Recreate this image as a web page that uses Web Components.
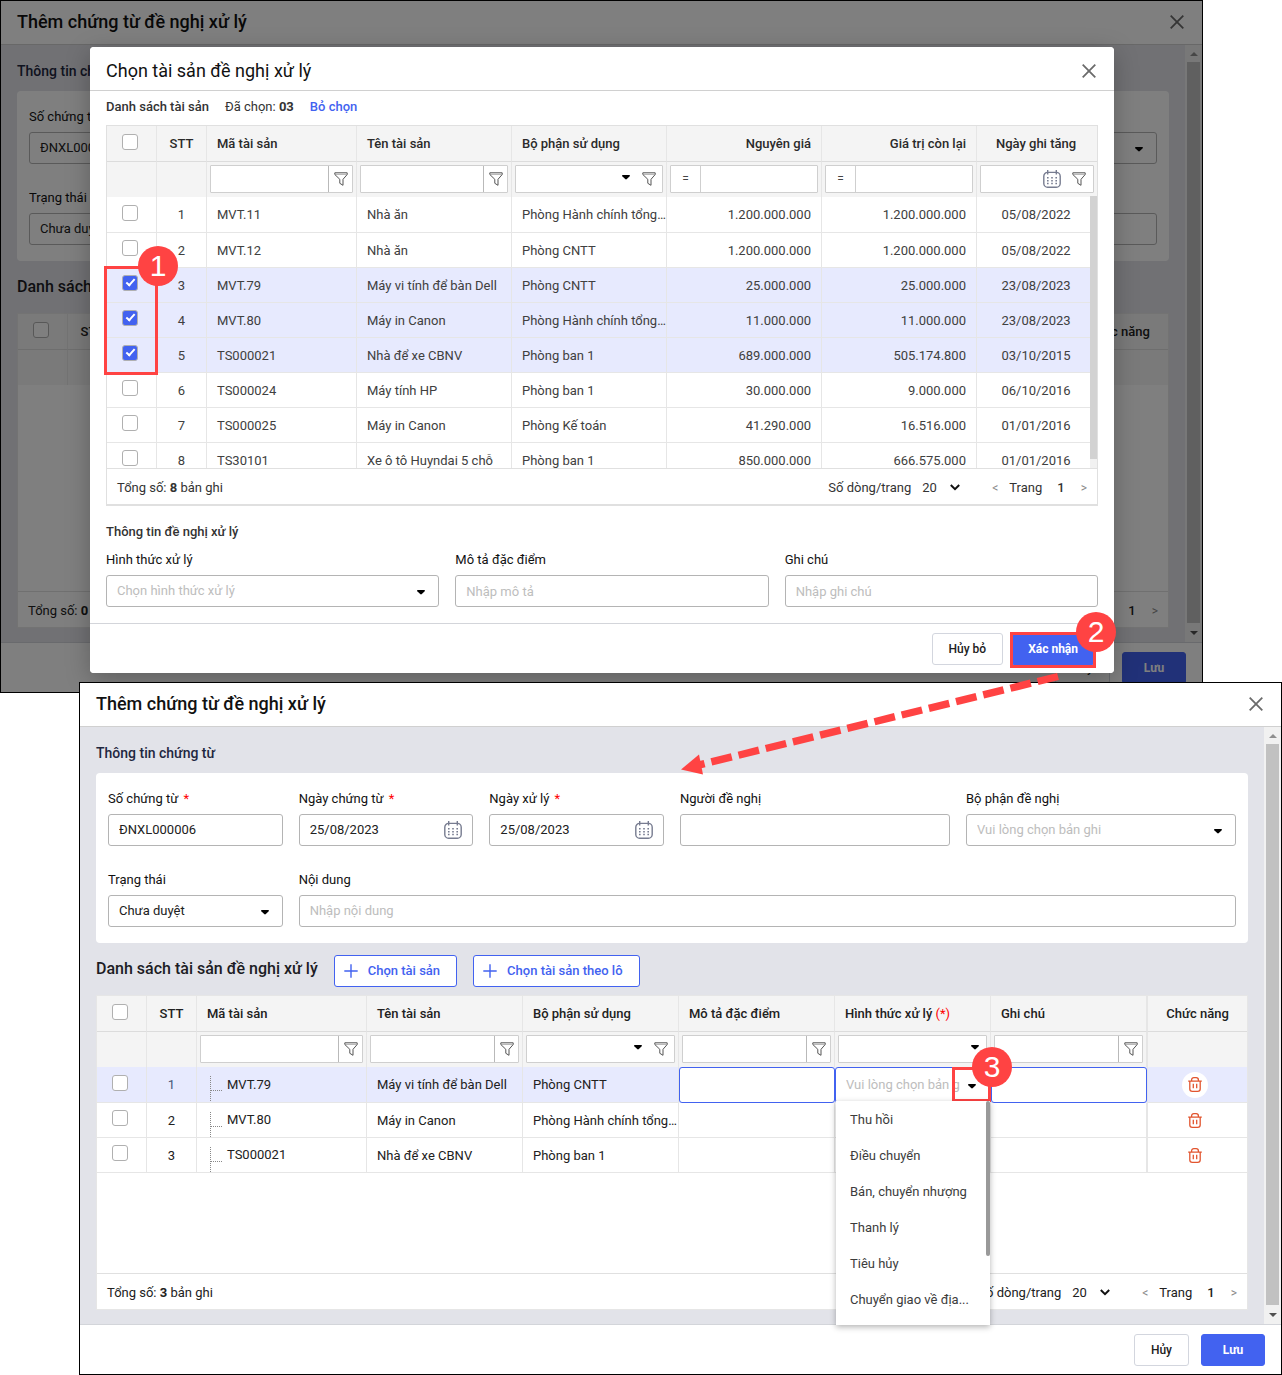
<!DOCTYPE html>
<html lang="vi">
<head>
<meta charset="utf-8">
<title>Thêm chứng từ đề nghị xử lý</title>
<style>
  body { margin: 0; background: #fff; font: 13px/18px Roboto, "Liberation Sans", sans-serif; color: #212121; }
</style>
</head>
<body>
<guide-stage></guide-stage>
<script>
const ICONS = {
  close: '<svg width="14" height="14" viewBox="0 0 14 14" fill="none" stroke="#6b6b6b" stroke-width="1.8"><path d="M.7.7l12.6 12.6M13.3.7L.7 13.3"/></svg>',
  plus: '<svg width="14" height="14" viewBox="0 0 14 14" fill="none" stroke="#4262f0" stroke-width="1.4"><path d="M7 .3v13.4M.3 7h13.4"/></svg>',
  caret: '<svg class="caret" width="8" height="5" viewBox="0 0 8 5"><path d="M.8 0h6.4c.8 0 1 .8.5 1.3L4.8 4.1c-.5.4-1.1.4-1.6 0L.3 1.3C-.2.8 0 0 .8 0z" fill="#000"/></svg>',
  chevron: '<svg width="10" height="7" viewBox="0 0 10 7" fill="none" stroke="#111" stroke-width="2"><path d="M.8 1L5 5.2 9.2 1"/></svg>',
  funnel: '<svg width="14" height="14" viewBox="0 0 14 14" fill="none" stroke="#555" stroke-width="1" stroke-linejoin="round"><path d="M.8.8h12.4v1.7L9 7.3v6l-3.2-2V7.3L.8 2.5z"/><path d="M1.2 2.4h11.6" stroke-opacity=".45"/></svg>',
  calendar: '<svg width="18" height="18" viewBox="0 0 18 18" fill="none" stroke="#777c90" stroke-width="1.4"><rect x=".8" y="2.4" width="16.4" height="14.8" rx="3.8"/><path d="M4.7 0v4.6M13.3 0v4.6"/><path d="M4 7.8h10.4M4 10.7h10.4M4 13.6h10.4" stroke-width="1.5" stroke-dasharray="1.6 2.6"/></svg>',
  trash: '<svg width="14" height="15" viewBox="0 0 14 15" fill="none" stroke="#e2552f" stroke-width="1.3"><path d="M.2 4.1h13.6M3.6 4V2.9C3.6 1.5 4.6.7 5.8.7h2.4c1.2 0 2.2.8 2.2 2.2V4M1.8 4.3v7.6c0 1.5 1 2.4 2.5 2.4h5.4c1.5 0 2.5-.9 2.5-2.4V4.3M5.3 6.7v4.6M8.7 6.7v4.6"/></svg>',
  tree: '<svg width="12" height="25" viewBox="0 0 12 25" fill="none" stroke="#888" stroke-dasharray="1 1"><path d="M.5 0v25M1 14.5h11"/></svg>'
};

const BASE = `
  *, ::before, ::after { box-sizing: border-box; }
  button, input, select { font: inherit; color: inherit; margin: 0; }
  button { cursor: pointer; }
  svg { display: block; flex: none; }
  .icon { border: 0; padding: 0; background: none; }
`;

function define(name, render) {
  customElements.define(name, class extends HTMLElement {
    constructor() { super(); this.attachShadow({ mode: 'open' }); }
    connectedCallback() {
      const t = document.createElement('template');
      t.innerHTML = render(this);
      this.shadowRoot.replaceChildren(t.content.cloneNode(true));
    }
  });
}

/* Push button: kind = primary | plain | outline */
define('ui-button', el => `
  <style>${BASE}
    :host { display: block; }
    button { display: flex; align-items: center; justify-content: center; height: 32px; width: 100%;
      border: 1px solid #d3d6de; border-radius: 3px; background: #fff; padding: 0 16px;
      font-size: 12px; font-weight: 500; color: #212121; white-space: nowrap; }
    .primary { min-width: 64px; background: #4262f0; border-color: #4262f0; color: #fff; font-weight: 700; }
    .outline { gap: 10px; padding: 0 16px 0 9px; border-color: #4262f0; color: #4262f0; font-size: 13px; }
  </style>
  <button type="button" class="${el.getAttribute('kind') || 'plain'}">${el.getAttribute('kind') === 'outline' ? ICONS.plus : ''}<slot></slot></button>`);

/* Labelled field: type = text | date | select */
define('form-field', el => {
  const a = n => el.getAttribute(n) || '';
  const type = a('type') || 'text';
  const value = a('value'), hint = a('placeholder');
  const control = type === 'select'
    ? `<select id="c" class="${value ? '' : 'hint'}"><option>${value || hint}</option></select>${ICONS.caret}`
    : `<input id="c" type="text" value="${value}" placeholder="${hint}" autocomplete="off">${type === 'date' ? `<button type="button" class="icon" aria-label="Lịch">${ICONS.calendar}</button>` : ''}`;
  return `
  <style>${BASE}
    :host { display: block; min-width: 0; }
    label { display: block; padding-top: 1px; margin-bottom: 6px; color: #111; white-space: nowrap; min-height: 19px; }
    em { color: #f00; font-style: normal; margin-left: 2px; }
    .box { display: grid; grid-template-columns: minmax(0, 1fr) auto; align-items: center; height: 32px;
      border: 1px solid #b4b4b4; border-radius: 3px; background: #fff; }
    input, select { grid-area: 1 / 1 / 2 / 3; width: 100%; height: 30px; border: 0; outline: 0; background: none; padding: 0 10px; appearance: none; }
    input { padding-bottom: var(--field-lift, 2px); }
    ::placeholder, .hint { color: #bdbdbd; opacity: 1; }
    .icon { grid-area: 1 / 2; margin-right: 10px; }
    .caret { grid-area: 1 / 2; margin: 2px 13px 0 0; pointer-events: none; }
  </style>
  <label for="c">${a('label')}${el.hasAttribute('required') ? ' <em>*</em>' : ''}</label>
  <div class="box">${control}</div>`;
});

/* Options list that opens under the edited cell */
define('option-menu', () => `
  <style>${BASE}
    :host { display: block; background: #fff; box-shadow: 0 2px 6px rgba(0,0,0,.3); }
    ul { list-style: none; margin: 0; padding: 1px 0 7px; }
    li { height: 36px; line-height: 36px; padding: 0 16px 0 14px; overflow: hidden; text-overflow: ellipsis; white-space: nowrap; color: #3c3c3c; }
    i { position: absolute; right: 0; top: 0; width: 4px; height: 155px; border-radius: 2px; background: #999; }
  </style>
  <ul role="listbox" aria-label="Hình thức xử lý">
    ${['Thu hồi', 'Điều chuyển', 'Bán, chuyển nhượng', 'Thanh lý', 'Tiêu hủy', 'Chuyển giao về địa...'].map(t => `<li role="option">${t}</li>`).join('')}
  </ul><i></i>`);

define('grid-pager', el => `
  <style>${BASE}
    :host { display: flex; align-items: center; height: 36px; padding: 2px 10px 0; border-top: 1px solid #e0e0e0; background: #fff; white-space: nowrap; }
    b { font-weight: 700; }
    .total { flex: 1; }
    label { margin-right: 11px; }
    .size { display: grid; align-items: center; width: 38px; margin-right: 32px; }
    .size > * { grid-area: 1 / 1; }
    select { appearance: none; border: 0; padding: 0; background: none; width: 100%; }
    .size svg { justify-self: end; pointer-events: none; }
    nav { display: flex; align-items: center; }
    nav b { margin: 0 16px 0 15px; font-weight: 500; }
    nav span { margin-left: 11px; }
    nav button { color: #8a8a8a; font-size: 12px; }
  </style>
  <span class="total">Tổng số: <b>${el.getAttribute('total')}</b> bản ghi</span>
  <label for="s">Số dòng/trang</label>
  <span class="size"><select id="s"><option>20</option></select>${ICONS.chevron}</span>
  <nav aria-label="Phân trang">
    <button type="button" class="icon" aria-label="Trang trước">&lt;</button>
    <span>Trang</span><b>1</b>
    <button type="button" class="icon" aria-label="Trang sau">&gt;</button>
  </nav>`);

/* Column: { t: title, w: width, align, f: filter kind, k: cell kind } */
const box = (on, label) => `<input type="checkbox" aria-label="${label}"${on ? ' checked' : ''}>`;
const funnel = kind => `<button type="button" class="icon ${kind}" aria-label="Lọc">${ICONS.funnel}</button>`;
const FILTERS = {
  text: t => `<div class="f"><input type="text" aria-label="Lọc ${t}">${funnel('split')}</div>`,
  select: t => `<div class="f"><select aria-label="Lọc ${t}"><option></option></select>${ICONS.caret}${funnel('after')}</div>`,
  pick: t => `<div class="f"><select aria-label="Lọc ${t}"><option></option></select>${ICONS.caret}</div>`,
  number: t => `<div class="f"><button type="button" class="icon eq">=</button><input type="text" aria-label="Lọc ${t}"></div>`,
  date: t => `<div class="f"><input type="text" aria-label="Lọc ${t}"><button type="button" class="icon" aria-label="Lịch">${ICONS.calendar}</button>${funnel('date')}</div>`
};
const asset = [
  { k: 'check', w: 50, align: 'c' },
  { t: 'STT', w: 50, align: 'c' }
];
const GRIDS = {
  pick: {
    cols: [...asset,
      { t: 'Mã tài sản', w: 150, f: 'text' }, { t: 'Tên tài sản', f: 'text' }, { t: 'Bộ phận sử dụng', f: 'select' },
      { t: 'Nguyên giá', f: 'number', align: 'r' }, { t: 'Giá trị còn lại', f: 'number', align: 'r' },
      { t: 'Ngày ghi tăng', w: 120, f: 'date', align: 'c day' }],
    rows: [
      [0, '1', 'MVT.11', 'Nhà ăn', 'Phòng Hành chính tổng hợp', '1.200.000.000', '1.200.000.000', '05/08/2022'],
      [0, '2', 'MVT.12', 'Nhà ăn', 'Phòng CNTT', '1.200.000.000', '1.200.000.000', '05/08/2022'],
      [1, '3', 'MVT.79', 'Máy vi tính để bàn Dell', 'Phòng CNTT', '25.000.000', '25.000.000', '23/08/2023'],
      [1, '4', 'MVT.80', 'Máy in Canon', 'Phòng Hành chính tổng hợp', '11.000.000', '11.000.000', '23/08/2023'],
      [1, '5', 'TS000021', 'Nhà để xe CBNV', 'Phòng ban 1', '689.000.000', '505.174.800', '03/10/2015'],
      [0, '6', 'TS000024', 'Máy tính HP', 'Phòng ban 1', '30.000.000', '9.000.000', '06/10/2016'],
      [0, '7', 'TS000025', 'Máy in Canon', 'Phòng Kế toán', '41.290.000', '16.516.000', '01/01/2016'],
      [0, '8', 'TS30101', 'Xe ô tô Huyndai 5 chỗ', 'Phòng ban 1', '850.000.000', '666.575.000', '01/01/2016']]
  },
  voucher: {
    cols: [...asset,
      { t: 'Mã tài sản', w: 170, f: 'text', k: 'tree' }, { t: 'Tên tài sản', f: 'text' }, { t: 'Bộ phận sử dụng', f: 'select' },
      { t: 'Mô tả đặc điểm', f: 'text', k: 'edit' }, { t: 'Hình thức xử lý <em>(*)</em>', f: 'pick', k: 'choose' },
      { t: 'Ghi chú', f: 'text', k: 'edit' }, { t: 'Chức năng', w: 100, align: 'c last', k: 'action' }],
    rows: [
      [0, '1', 'MVT.79', 'Máy vi tính để bàn Dell', 'Phòng CNTT', '', '', '', ''],
      [0, '2', 'MVT.80', 'Máy in Canon', 'Phòng Hành chính tổng hợp', '', '', '', ''],
      [0, '3', 'TS000021', 'Nhà để xe CBNV', 'Phòng ban 1', '', '', '', '']]
  },
  blank: {
    cols: [...asset, { w: 170 }, {}, {}, {}, {}, {}, { t: 'Chức năng', w: 100, align: 'c last' }],
    rows: []
  }
};

define('data-grid', el => {
  const kind = el.getAttribute('kind'), { cols, rows } = GRIDS[kind];
  const cell = (c, v, i, r) => {
    const on = kind === 'voucher' && i === 0, cls = [c.align || '', c.k || ''];
    let html = v;
    if (c.k === 'check') html = box(v, 'Chọn dòng ' + r[1]);
    if (c.k === 'tree') html = `<div class="branch">${ICONS.tree}${v}</div>`;
    if (c.k === 'action') html = `<button type="button" class="icon bin" aria-label="Xóa">${ICONS.trash}</button>`;
    if (c.k === 'edit' && on) html = `<div class="e"><input type="text" aria-label="${c.t}"></div>`;
    if (c.k === 'choose' && on) html = `<div class="e"><select aria-label="Hình thức xử lý"><option>Vui lòng chọn bản ghi</option></select>${ICONS.caret}</div><option-menu></option-menu>`;
    return `<td class="${cls.join(' ')}">${html}</td>`;
  };
  return `
  <style>${BASE}
    :host { display: block; border: 1px solid #e6e6e6; background: #fff; }
    .view { position: relative; }
    table { width: 100%; table-layout: fixed; border-collapse: separate; border-spacing: 0; }
    th, td { padding: 0 0 0 10px; text-align: left; border-right: 1px solid #e6e6e6; border-bottom: 1px solid #e6e6e6;
      white-space: nowrap; overflow: hidden; text-overflow: ellipsis; }
    th:last-child, td:last-child { border-right: 0; }
    th { height: 36px; background: #f4f4f4; font-weight: 500; border-bottom-color: #dcdcdc; }
    th em { color: #f00; font-style: normal; font-weight: 400; }
    td { height: 35px; padding-top: 1px; }
    tbody tr:first-child td { height: 36px; }
    tr.filters td { height: 35px; background: #f4f4f4; padding: 3px 3px 4px; border-bottom: 0; }
    .c { text-align: center; padding-left: 0; }
    .r { text-align: right; padding-left: 0; padding-right: 10px; }
    .day { padding-right: 2px; }
    .check { padding: 0 4px 0 0; }
    th.last, td.last { border-left: 1px solid #e6e6e6; }
    .sel td { background: #e7eafe; }
    .f { display: flex; align-items: center; height: 28px; border: 1px solid #cfcfcf; background: #fff; border-radius: 1px; }
    .f input, .f select { flex: 1; min-width: 0; height: 26px; border: 0; background: none; padding: 0 6px; appearance: none; outline: 0; }
    .f .icon { display: flex; align-items: center; justify-content: center; height: 26px; }
    .f .split { width: 24px; border-left: 1px solid #b9b9b9; }
    .f .split svg { margin-left: 1px; }
    .f .eq { width: 30px; border-right: 1px solid #cfcfcf; font-size: 12px; color: #444; }
    .f .after { width: 14px; margin: 0 6px 0 12px; }
    .f .date { width: 14px; margin: 0 7px 0 11px; }
    .f .caret { margin-bottom: 4px; }
    .f .caret:last-child { margin-right: 7px; }
    input[type=checkbox] { display: block; appearance: none; width: 16px; height: 16px; margin: 0 auto 4px; border: 1px solid #b0b0b0; border-radius: 3px; background: #fff; }
    input[type=checkbox]:checked { background: #4262f0; }
    input[type=checkbox]:checked::after { content: ""; display: block; width: 9px; height: 5px; margin: 3px 0 0 3px; border: solid #fff; border-width: 0 0 2px 2px; transform: rotate(-48deg); }
    .branch { display: flex; align-items: center; gap: 5px; padding-left: 3px; }
    .branch svg { margin-top: 8px; }
    .bin { display: grid; place-items: center; width: 26px; height: 26px; margin: 0 auto; border-radius: 50%; }
    .action { padding-right: 6px; padding-top: 0; }
    .sel .bin { background: #fff; }
    .pick-view { max-height: 342px; overflow: hidden; color: #404040; }
    .pick-view th { color: #2a2a2a; }
    .pick-view i { position: absolute; right: 0; top: 70px; bottom: 0; width: 7px; background: #f1f1f1; }
    .pick-view i::before { content: ""; display: block; height: 263px; background: #d2d2d2; }
    .voucher-view, .blank-view { min-height: 277px; }
    td.tree { padding-top: 0; }
    .sel .edit, .sel .choose { padding: 0; overflow: visible; position: relative; border: 0; }
    .e { display: grid; grid-template-columns: minmax(0, 1fr) auto; align-items: center; height: 36px; border: 1px solid #4262f0; border-radius: 3px; background: #fff; }
    .e input { width: 100%; height: 33px; border: 0; outline: 0; background: none; padding: 0 10px; }
    .e select { width: 100%; height: 33px; border: 0; background: none; appearance: none; padding: 0 0 0 10px; color: #bdbdbd; }
    .e .caret { margin: 2px 14px 0 8px; }
    .voucher-view .sel td:nth-child(2) { color: #4a5878; }
    option-menu { position: absolute; left: 1px; right: 1px; top: 34px; z-index: 2; }
  </style>
  <div class="view ${kind}-view">
    <table>
      <colgroup>${cols.map(c => `<col${c.w ? ` style="width:${c.w}px"` : ''}>`).join('')}</colgroup>
      <thead>
        <tr>${cols.map(c => `<th scope="col" class="${c.align || ''} ${c.k === 'check' ? 'check' : ''}">${c.k === 'check' ? box(0, 'Chọn tất cả') : c.t || ''}</th>`).join('')}</tr>
        <tr class="filters">${cols.map(c => `<td class="${(c.align || '').includes('last') ? 'last' : ''}">${c.f ? FILTERS[c.f](c.t.replace(/ <.*/, '')) : ''}</td>`).join('')}</tr>
      </thead>
      <tbody>${rows.map((r, i) => `<tr class="${r[0] || (kind === 'voucher' && i === 0) ? 'sel' : ''}">${r.map((v, j) => cell(cols[j], v, i, r)).join('')}</tr>`).join('')}</tbody>
    </table>${kind === 'pick' ? '<i></i>' : ''}
  </div>
  <grid-pager total="${rows.length}"></grid-pager>`;
});

define('scroll-rail', () => `
  <style>${BASE}
    :host { display: flex; flex-direction: column; width: 17px; background: #f1f1f1; }
    span { height: 17px; display: grid; place-items: center; }
    i { flex: 1; margin: 0 2px; background: #c1c1c1; }
    span:last-child { height: 19px; }
  </style>
  <span><svg width="8" height="4" viewBox="0 0 8 4"><path d="M0 4l4-4 4 4z" fill="#8f8f8f"/></svg></span><i></i>
  <span><svg width="8" height="4" viewBox="0 0 8 4"><path d="M0 0l4 4 4-4z" fill="#505050"/></svg></span>`);

/* Title bar shared by the form window and the pop-up */
define('title-bar', () => `
  <style>${BASE}
    :host { display: flex; align-items: center; justify-content: space-between; height: 44px; padding: 0 18px 2px 16px;
      border-bottom: 1px solid #d0d0d0; background: #fff; }
    h1 { margin: 0; font-size: 18px; line-height: 24px; font-weight: inherit; color: #111; }
  </style>
  <h1><slot></slot></h1><button type="button" class="icon" aria-label="Đóng">${ICONS.close}</button>`);

define('action-bar', () => `
  <style>${BASE}
    :host { display: flex; justify-content: flex-end; gap: 12px; padding: 9px 16px 8px; border-top: 1px solid #d3d5da; background: #fff; }
  </style><slot></slot>`);

define('voucher-window', el => {
  const full = el.hasAttribute('full');
  const field = (span, label, rest) => `<form-field class="s${span}" label="${label}" ${rest || ''}></form-field>`;
  const fields = full
    ? field(2, 'Số chứng từ', 'required value="ĐNXL000006"') + field(2, 'Ngày chứng từ', 'required type="date" value="25/08/2023"')
      + field(2, 'Ngày xử lý', 'required type="date" value="25/08/2023"') + field(3, 'Người đề nghị')
      + field(3, 'Bộ phận đề nghị', 'type="select" placeholder="Vui lòng chọn bản ghi"')
      + field(2, 'Trạng thái', 'type="select" value="Chưa duyệt"') + field(10, 'Nội dung', 'placeholder="Nhập nội dung"')
    : field(2, 'Số chứng từ', 'required value="ĐNXL000006"') + field(2, '') + field(2, '') + field(3, '') + field(3, '', 'type="select"')
      + field(2, 'Trạng thái', 'type="select" value="Chưa duyệt"') + field(10, '');
  return `
  <style>${BASE}
    :host { display: block; position: relative; border: 1px solid #000; background: #fff; }
    title-bar { font-weight: 500; }
    .body { display: flex; background: #e2e3e9; }
    main { flex: 1; min-width: 0; padding: 16px 16px 14px; }
    h2 { margin: 0 0 10px; font-size: 14px; line-height: 20px; font-weight: 500; color: #1f2740; }
    .card { display: grid; grid-template-columns: repeat(12, minmax(0, 1fr)); gap: 24px 16px; padding: 16px 12px; border-radius: 4px; background: #fff; }
    .s2 { grid-column: span 2; } .s3 { grid-column: span 3; } .s10 { grid-column: span 10; }
    .bar { display: flex; gap: 16px; min-height: 32px; margin: 12px 0 8px; }
    h3 { margin: 0; font-size: 16px; line-height: 28px; font-weight: 500; color: #1c1c24; white-space: nowrap; }
  </style>
  <title-bar>Thêm chứng từ đề nghị xử lý</title-bar>
  <div class="body">
    <main>
      <h2>Thông tin chứng từ</h2>
      <div class="card">${fields}</div>
      <div class="bar"><h3>Danh sách tài sản đề nghị xử lý</h3>
        ${full ? '<ui-button kind="outline">Chọn tài sản</ui-button><ui-button kind="outline">Chọn tài sản theo lô</ui-button>' : ''}
      </div>
      <data-grid kind="${full ? 'voucher' : 'blank'}"></data-grid>
    </main>
    <scroll-rail></scroll-rail>
  </div>
  <action-bar><ui-button>Hủy</ui-button><ui-button kind="primary">Lưu</ui-button></action-bar>
  <slot></slot>`;
});

define('asset-picker', () => `
  <style>${BASE}
    :host { position: absolute; inset: 0; display: flex; justify-content: center; align-items: flex-start; padding: 46px 88px 0 89px; background: rgba(0,0,0,.5); --field-lift: 0px; }
    section { flex: 1; overflow: hidden; border-radius: 4px; background: #fff; box-shadow: 0 6px 24px rgba(0,0,0,.25); color: #333; }
    title-bar { padding: 4px 18px 0 16px; }
    .body { padding: 7px 16px 16px; }
    .line { display: flex; gap: 16px; margin-bottom: 9px; }
    b { font-weight: 500; }
    strong { font-weight: 700; }
    a { color: #4262f0; text-decoration: none; font-weight: 500; }
    data-grid { border-color: #e0e0e0; border-bottom-width: 2px; }
    h2 { margin: 17px 0 9px; font-size: 13px; line-height: 18px; font-weight: 500; }
    .fields { display: grid; grid-template-columns: 333fr 313fr 313fr; gap: 16px; }
    action-bar { gap: 8px; padding-right: 19px; }
  </style>
  <section role="dialog" aria-label="Chọn tài sản đề nghị xử lý">
    <title-bar>Chọn tài sản đề nghị xử lý</title-bar>
    <div class="body">
      <div class="line"><b>Danh sách tài sản</b><span>Đã chọn: <strong>03</strong></span><a href="#">Bỏ chọn</a></div>
      <data-grid kind="pick"></data-grid>
      <h2>Thông tin đề nghị xử lý</h2>
      <div class="fields">
        <form-field label="Hình thức xử lý" type="select" placeholder="Chọn hình thức xử lý"></form-field>
        <form-field label="Mô tả đặc điểm" placeholder="Nhập mô tả"></form-field>
        <form-field label="Ghi chú" placeholder="Nhập ghi chú"></form-field>
      </div>
    </div>
    <action-bar><ui-button>Hủy bỏ</ui-button><ui-button kind="primary">Xác nhận</ui-button></action-bar>
  </section>`);

define('step-badge', () => `
  <style>
    :host { position: absolute; display: grid; place-items: center; width: 40px; height: 40px; border-radius: 50%;
      background: #ff4343; color: #fff; font: 30px/40px "Liberation Sans", sans-serif; }
  </style><slot></slot>`);

/* Page: two overlapping windows with the numbered marks over them */
define('guide-stage', () => `
  <style>${BASE}
    :host { display: block; position: relative; overflow: hidden; }
    .first { margin-right: 79px; }
    .second { margin: -11px 0 0 79px; }
    .mark { position: absolute; border: 3px solid #ff4343; }
    .m1 { left: 104px; top: 266px; width: 54px; height: 109px; }
    .m2 { left: 1010px; top: 632px; width: 86px; height: 36px; }
    .m3 { left: 952px; top: 1067px; width: 39px; height: 35px; }
    .b1 { left: 138px; top: 246px; }
    .b2 { left: 1076px; top: 612px; }
    .b3 { left: 972px; top: 1047px; }
    .arrow { position: absolute; left: 0; top: 0; pointer-events: none; }
  </style>
  <voucher-window class="first"><asset-picker></asset-picker></voucher-window>
  <voucher-window class="second" full></voucher-window>
  <div class="mark m1"></div><div class="mark m2"></div><div class="mark m3"></div>
  <svg class="arrow" width="1282" height="800" viewBox="0 0 1282 800" aria-hidden="true">
    <path d="M1058 676.5L692 766.7" stroke="#ff4343" stroke-width="7.4" stroke-dasharray="21 7" fill="none"/>
    <path d="M681 769.5L699 754.5L703 774.5z" fill="#ff4343"/>
  </svg>
  <step-badge class="b1">1</step-badge><step-badge class="b2">2</step-badge><step-badge class="b3">3</step-badge>`);
</script>
</body>
</html>
